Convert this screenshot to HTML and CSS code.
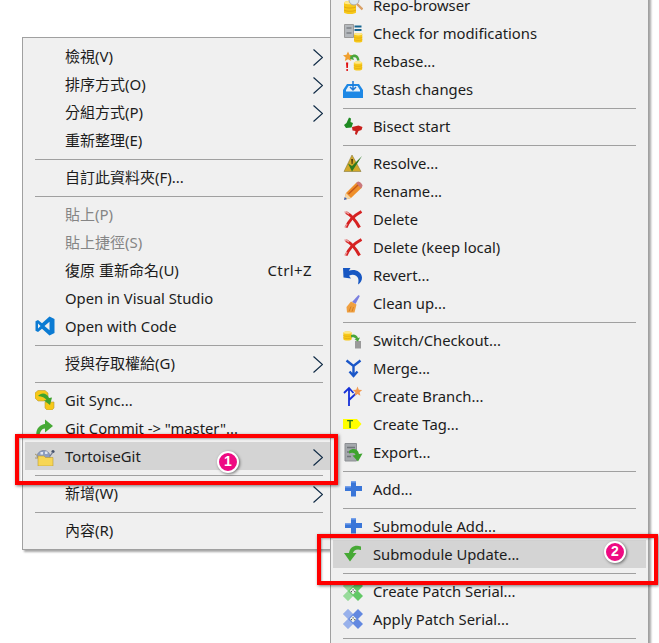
FILE: index.html
```html
<!DOCTYPE html>
<html lang="zh-Hant">
<head>
  <meta charset="UTF-8" />
  <meta name="viewport" content="width=device-width, initial-scale=1.0"/>
  <title>TortoiseGit context menu</title>
  <link rel="stylesheet" href="styles.css">
</head>
<body>

  <!-- shared icon parts -->
  <svg class="defs" aria-hidden="true">
    <defs>
      <symbol id="coin" viewBox="0 0 10 12">
        <path d="M0 2C0 0 10 0 10 2V10C10 12 0 12 0 10Z" fill="#f7c818"/>
        <path d="M0 2C0 3.700 10 3.700 10 2C10 0 0 0 0 2Z" fill="#ffe98a"/>
        <path d="M0 5.300C1 6.800 9 6.800 10 5.300M0 8C1 9.500 9 9.500 10 8" fill="none" stroke="#dba20e" stroke-width=".7"/>
      </symbol>
      <symbol id="cross" viewBox="0 0 20 20">
        <path d="M3 3.500C8 6 13 12 16.500 18.500" fill="none" stroke="#d62222" stroke-width="3"/>
        <path d="M18.500 2.500C12 6 6 11 3 18.500" fill="none" stroke="#d62222" stroke-width="3"/>
        <path d="M1.500 3C3 3 5 4 6 5M2 18.500L4 15" fill="none" stroke="#e99a9a" stroke-width="1.500"/>
      </symbol>
      <symbol id="plus" viewBox="0 0 20 20">
        <path d="M8 2H13V7H19V12H13V17.500H8V12H2V7H8Z" fill="#3a76d8"/>
        <path d="M8 2H13V3.500H8ZM2 7H8V8.500H2Z" fill="#78a2ea"/>
      </symbol>
      <symbol id="chevron" viewBox="0 0 10 17">
        <path d="M.5 .5L9.500 8.500L.5 16.500" fill="none" stroke="#0f2a45" stroke-width="1.200"/>
      </symbol>
      <symbol id="bandage" viewBox="0 0 20 20">
        <path d="M0 5L5 0L20 15L15 20Z" fill="currentColor"/>
        <path d="M0 15L15 0L20 5L5 20Z" fill="currentColor"/>
        <path d="M0 5L5 0L10 5L5 10ZM0 15L5 10L10 15L5 20Z" fill="#fff" opacity=".35"/>
        <path d="M6.500 10L10 6.500L13.500 10L10 13.500Z" fill="#eef4ee"/>
        <path d="M9.500 8.300h1.200v1.200H9.500zM7.800 10h1.200v1.200H7.800zM11.200 10h1.200v1.200h-1.200z" fill="#555"/>
      </symbol>
    </defs>
  </svg>

  <div class="menu menu-main">
    <div class="item zh"><span class="icon"></span>檢視(V)<svg class="chevron"><use href="#chevron"/></svg></div>
    <div class="item zh"><span class="icon"></span>排序方式(O)<svg class="chevron"><use href="#chevron"/></svg></div>
    <div class="item zh"><span class="icon"></span>分組方式(P)<svg class="chevron"><use href="#chevron"/></svg></div>
    <div class="item zh"><span class="icon"></span>重新整理(E)</div>
    <div class="sep"></div>
    <div class="item zh"><span class="icon"></span>自訂此資料夾(F)...</div>
    <div class="sep"></div>
    <div class="item zh disabled"><span class="icon"></span>貼上(P)</div>
    <div class="item zh disabled"><span class="icon"></span>貼上捷徑(S)</div>
    <div class="item zh"><span class="icon"></span>復原 重新命名(U)<span class="shortcut">Ctrl+Z</span></div>
    <div class="item"><span class="icon"></span>Open in Visual Studio</div>
    <div class="item">
      <svg class="icon" viewBox="0 0 20 20"><path fill-rule="evenodd" d="M14.500 .5L19.500 3V17L14.500 19.500L7 12.800L3 16L.5 14.800V5.200L3 4L7 7.200ZM14.500 5.800L9.500 10L14.500 14.200ZM3 7.500V12.500L5.500 10Z" fill="#0b7bd3"/></svg>
      Open with Code
    </div>
    <div class="sep"></div>
    <div class="item zh"><span class="icon"></span>授與存取權給(G)<svg class="chevron"><use href="#chevron"/></svg></div>
    <div class="sep"></div>
    <div class="item">
      <svg class="icon" viewBox="0 0 20 20">
        <path d="M0 3L3 .5H10L13 3V11H3L0 8Z" fill="#f7c818" stroke="#b99a3a" stroke-width=".6"/>
        <path d="M10 12H19V18L17 20H12L10 18Z" fill="#f7c818" stroke="#b99a3a" stroke-width=".6"/>
        <path d="M3 6C6 2 12 2.500 14 8L17 7.500L15 15L9 10.500L11.500 10C10 7.500 7 6.500 3 6Z" fill="#3ea32e"/>
      </svg>
      Git Sync...
    </div>
    <div class="item">
      <svg class="icon" viewBox="0 0 20 20"><path d="M1.500 19C0 11 5 6.500 10 6V1.500L18 8L10 14.500V10.500C7 10.500 4.500 13.500 4.500 19Z" fill="#46a935"/></svg>
      Git Commit -&gt; "master"...
    </div>
    <div class="item active">
      <svg class="icon" viewBox="0 0 20 20">
        <path d="M2 11C2 3 14 2 15 10L15 12H3Z" fill="#8d9ec0" stroke="#6b7690" stroke-width=".6"/>
        <path d="M5.500 6h2.500v2.500H5.500zM10 5.500h2.500v2.500H10z" fill="#dfe5ef"/>
        <circle cx="18" cy="5.500" r="1.600" fill="#44506a"/>
        <path d="M15 10L18 6" stroke="#6b7690" stroke-width="1.200"/>
        <path d="M0 8L3 10M0 12L3 12" stroke="#a89a6c" stroke-width="1"/>
        <path d="M3 10H9L10.500 11.500H18V20H3Z" fill="#f7d654" stroke="#b99a3a" stroke-width=".6"/>
      </svg>
      TortoiseGit<svg class="chevron"><use href="#chevron"/></svg>
    </div>
    <div class="sep"></div>
    <div class="item zh"><span class="icon"></span>新增(W)<svg class="chevron"><use href="#chevron"/></svg></div>
    <div class="sep"></div>
    <div class="item zh"><span class="icon"></span>內容(R)</div>
  </div>

  <div class="menu menu-sub">
    <div class="item">
      <svg class="icon" viewBox="0 0 20 20">
        <use href="#coin" x="1" y="5" width="12" height="15"/>
        <circle cx="11" cy="5" r="5" fill="#dbe7ee" stroke="#a9a9a9"/>
        <path d="M14 9L19.500 14.500" stroke="#d9a066" stroke-width="2.400"/>
      </svg>
      Repo-browser
    </div>
    <div class="item">
      <svg class="icon" viewBox="0 0 20 20">
        <path d="M1.500 1.500H10.500V14.500H1.500Z" fill="#b4b8bc" stroke="#9a9a9a"/>
        <path d="M3.500 5H8.500M3.500 10H8.500" stroke="#7d8186" stroke-width="1.300"/>
        <path d="M11.500 3.500H18.500M11.500 7H18.500" stroke="#16648f" stroke-width="1.800"/>
        <use href="#coin" x="11" y="9.500" width="8.500" height="10.500"/>
      </svg>
      Check for modifications
    </div>
    <div class="item">
      <svg class="icon" viewBox="0 0 20 20">
        <path d="M5 .5L6.500 3.800L10 4.200L7.400 6.500L8.200 10L5 8.200L1.800 10L2.600 6.500L0 4.200L3.500 3.800Z" fill="#f0a030"/>
        <path d="M3 11.500H5.200L4.900 17H3.400ZM3.400 18H4.900V20H3.400Z" fill="#e01010"/>
        <use href="#coin" x="10" y="10" width="10" height="10"/>
        <path d="M8 5C11 2 16 3.500 16.500 9.500H14C14 6.500 12 5.500 10 6.500L11 9L7 8L7.500 4Z" fill="#4aa63a"/>
      </svg>
      Rebase...
    </div>
    <div class="item">
      <svg class="icon" viewBox="0 0 20 20">
        <path d="M0 11L4 5H16L20 11V19H0Z" fill="#1e88e5"/>
        <path d="M3 11L5.500 7H14.500L17 11V12.500H3Z" fill="#e8f2fb"/>
        <path d="M10 2V10.500M7 8L10 11L13 8" fill="none" stroke="#1e78d5" stroke-width="1.500"/>
      </svg>
      Stash changes
    </div>
    <div class="sep"></div>
    <div class="item">
      <svg class="icon" viewBox="0 0 20 20">
        <path d="M1 9L3.500 7L6 1.500L8 2.500L7.500 6L10 7L8.500 11.500L3 12Z" fill="#1f8a22"/>
        <path d="M9 11L15.500 9.500L19.500 11L18.500 14L15.500 15L13.500 19L12 18L12.500 15L9.500 14.500Z" fill="#c8201c"/>
      </svg>
      Bisect start
    </div>
    <div class="sep"></div>
    <div class="item">
      <svg class="icon" viewBox="0 0 20 20">
        <path d="M9 2L18 18.500H1Z" fill="#d2a92a" stroke="#8a7a3a" stroke-width=".6"/>
        <path d="M8.200 6H10L9.600 11H8.600Z" fill="#4a3a10"/>
        <path d="M5 10.500L9 18.500L19 3L9 13Z" fill="#2c7a22"/>
      </svg>
      Resolve...
    </div>
    <div class="item">
      <svg class="icon" viewBox="0 0 20 20">
        <path d="M1 19L3 12L13.500 1.500L19 6.500L8 17Z" fill="#ee8f2a"/>
        <path d="M13 2L15 .5C16.500 0 20 3.500 19.500 5L18 7.500Z" fill="#c9787c"/>
        <path d="M1 19L3 12L8 17Z" fill="#f2d6a8"/>
        <path d="M1 19L1.800 16L4 18Z" fill="#2d5fc4"/>
        <path d="M5.500 13L15 4" stroke="#c5561a" stroke-width="1.400"/>
      </svg>
      Rename...
    </div>
    <div class="item"><svg class="icon"><use href="#cross"/></svg>Delete</div>
    <div class="item"><svg class="icon"><use href="#cross"/></svg>Delete (keep local)</div>
    <div class="item">
      <svg class="icon" viewBox="0 0 20 20"><path d="M0 3L7.500 3L5.800 5.800C11 3.500 18.500 6 19 12.500C19.200 15 17.500 18 15 19.500C16 15 15.500 12.500 13 10.800C11 9.500 8.500 9.500 6 10.800L8 13.500L.5 12.500Z" fill="#1757c2"/></svg>
      Revert...
    </div>
    <div class="item">
      <svg class="icon" viewBox="0 0 20 20">
        <path d="M15.500 2L16.800 3L12.500 11L9 9Z" fill="#7a7fe0"/>
        <path d="M8 8.500L13.500 11.500L11.500 19.500H4L3.500 14Z" fill="#f0a040"/>
        <path d="M6 18.500L8 13.500M9 18.500L10.500 14" stroke="#d07c20" stroke-width=".9"/>
      </svg>
      Clean up...
    </div>
    <div class="sep"></div>
    <div class="item">
      <svg class="icon" viewBox="0 0 20 20">
        <use href="#coin" x="0" y="1" width="9" height="10"/>
        <path d="M12 11H18V18.500H12Z" fill="#9a9a9a"/>
        <path d="M8 5C11 3.500 14 5 15 8L17 7.500L15 11.500L11.500 9.500L13 9C12 7.500 10 7 8 7.500Z" fill="#4aa63a"/>
      </svg>
      Switch/Checkout...
    </div>
    <div class="item">
      <svg class="icon" viewBox="0 0 20 20"><path d="M3.500 2.500L10.500 8L17.500 2.500M10.500 8V18M6.500 13.500L10.500 18L14.500 13.500" fill="none" stroke="#1a56c8" stroke-width="2.400"/></svg>
      Merge...
    </div>
    <div class="item">
      <svg class="icon" viewBox="0 0 20 20">
        <path d="M6 3V20M6 14L13 7.500M1 7L6 2L10.500 7" fill="none" stroke="#1530d8" stroke-width="1.800"/>
        <path d="M14.500 .5L15.800 3.700L19.200 4L16.600 6.300L17.400 9.800L14.500 8L11.600 9.800L12.400 6.300L9.800 4L13.200 3.700Z" fill="#f29a50"/>
      </svg>
      Create Branch...
    </div>
    <div class="item">
      <svg class="icon" viewBox="0 0 20 20">
        <path d="M0 5H14L18.500 10L14 15H0Z" fill="#ffff00"/>
        <text class="tag-letter" x="7" y="13.500" text-anchor="middle">T</text>
      </svg>
      Create Tag...
    </div>
    <div class="item">
      <svg class="icon" viewBox="0 0 20 20">
        <path d="M2 1.500H13.500V19H2Z" fill="#a5a9ad" stroke="#8c8f93"/>
        <path d="M4 5.500H12M4 10H8M4 14.500H8" stroke="#70757a" stroke-width="1.300"/>
        <path d="M6 9C10 5.500 15 7 16 12L19.500 11.500L15 19.500L9.500 13.500L12.500 13C12 11 9.500 10 6 11.500Z" fill="#3ea32e"/>
      </svg>
      Export...
    </div>
    <div class="sep"></div>
    <div class="item"><svg class="icon"><use href="#plus"/></svg>Add...</div>
    <div class="sep"></div>
    <div class="item"><svg class="icon"><use href="#plus"/></svg>Submodule Add...</div>
    <div class="item active">
      <svg class="icon" viewBox="0 0 20 20"><path d="M18 2.500C12 .5 7 3 6 9H1L7 17.500L13.500 9H10C10.500 6.500 13.500 4.500 18 6Z" fill="#46a935"/></svg>
      Submodule Update...
    </div>
    <div class="sep"></div>
    <div class="item"><svg class="icon patch-green"><use href="#bandage"/></svg>Create Patch Serial...</div>
    <div class="item"><svg class="icon patch-blue"><use href="#bandage"/></svg>Apply Patch Serial...</div>
    <div class="sep"></div>
  </div>

  <!-- annotations drawn over the screenshot -->
  <div class="callout callout-1"></div>
  <div class="callout callout-2"></div>
  <div class="badge badge-1">1</div>
  <div class="badge badge-2">2</div>

</body>
</html>
```

FILE: styles.css
```css
body {
  background-color: white;
  font-family: "Noto Sans", "Noto Sans CJK TC", sans-serif;
  font-size: 14.8px;
  color: #1c1c1c;
  height: 100vh;
  margin: 0;
  position: relative;
  overflow: hidden;
}

.defs {
  width: 0;
  height: 0;
  display: block;
}

.menu {
  position: absolute;
  box-sizing: border-box;
  background-color: #f0f0f0;
  border: 1px solid #a0a0a0;
  box-shadow: 2px 2px 2px rgba(0, 0, 0, 0.35);
}

.menu-main {
  left: 22px;
  top: 37px;
  width: 309px;
  padding: 4px 0 5px 2px;
}

.menu-sub {
  left: 330px;
  top: -12px;
  width: 319px;
  padding: 2px;
}

.item {
  box-sizing: border-box;
  display: flex;
  align-items: center;
  gap: 10px;
  height: 28px;
  padding-left: 10px;
  white-space: nowrap;
}

/* CJK labels sit a pixel higher than the latin ones */
.zh {
  font-size: 15px;
  padding-bottom: 2px;
}

.disabled {
  color: #858585;
}

.active {
  background-color: #d4d4d4;
}

.icon {
  width: 20px;
  height: 20px;
  flex: none;
  filter: blur(0.3px);
}

.chevron {
  width: 10px;
  height: 17px;
  margin-left: auto;
  margin-right: 7px;
  margin-top: 2px;
}

.zh .chevron {
  margin-top: 4px;
}

.shortcut {
  margin-left: auto;
  margin-right: 18px;
  margin-top: 2px;
  letter-spacing: 0.4px;
}

.sep {
  height: 1px;
  background-color: #a0a0a0;
  margin: 5px 10px 3px;
}

.menu-main .sep {
  margin-right: 7px;
}

.tag-letter {
  font-family: "Liberation Sans", sans-serif;
  font-size: 10px;
  font-weight: bold;
  fill: #2a7a1a;
}

.patch-green {
  color: #62c866;
}

.patch-blue {
  color: #6288e0;
}

.callout {
  position: absolute;
  box-sizing: border-box;
  border: 4px solid #ff0000;
  box-shadow: 1px 1px 3px rgba(0, 0, 0, 0.5), inset 1px 1px 2px rgba(0, 0, 0, 0.3);
}

.callout-1 {
  left: 15px;
  top: 434px;
  width: 323px;
  height: 51px;
}

.callout-2 {
  left: 317px;
  top: 534px;
  width: 341px;
  height: 51px;
}

.badge {
  position: absolute;
  box-sizing: border-box;
  width: 22px;
  height: 22px;
  border: 2.5px solid white;
  border-radius: 50%;
  background-color: #ee0a82;
  color: white;
  font-family: "Liberation Sans", sans-serif;
  font-size: 14px;
  font-weight: bold;
  line-height: 17px;
  text-align: center;
  box-shadow: 1px 1px 3px rgba(0, 0, 0, 0.5);
}

.badge-1 {
  left: 217px;
  top: 451px;
}

.badge-2 {
  left: 604px;
  top: 541px;
}
```
